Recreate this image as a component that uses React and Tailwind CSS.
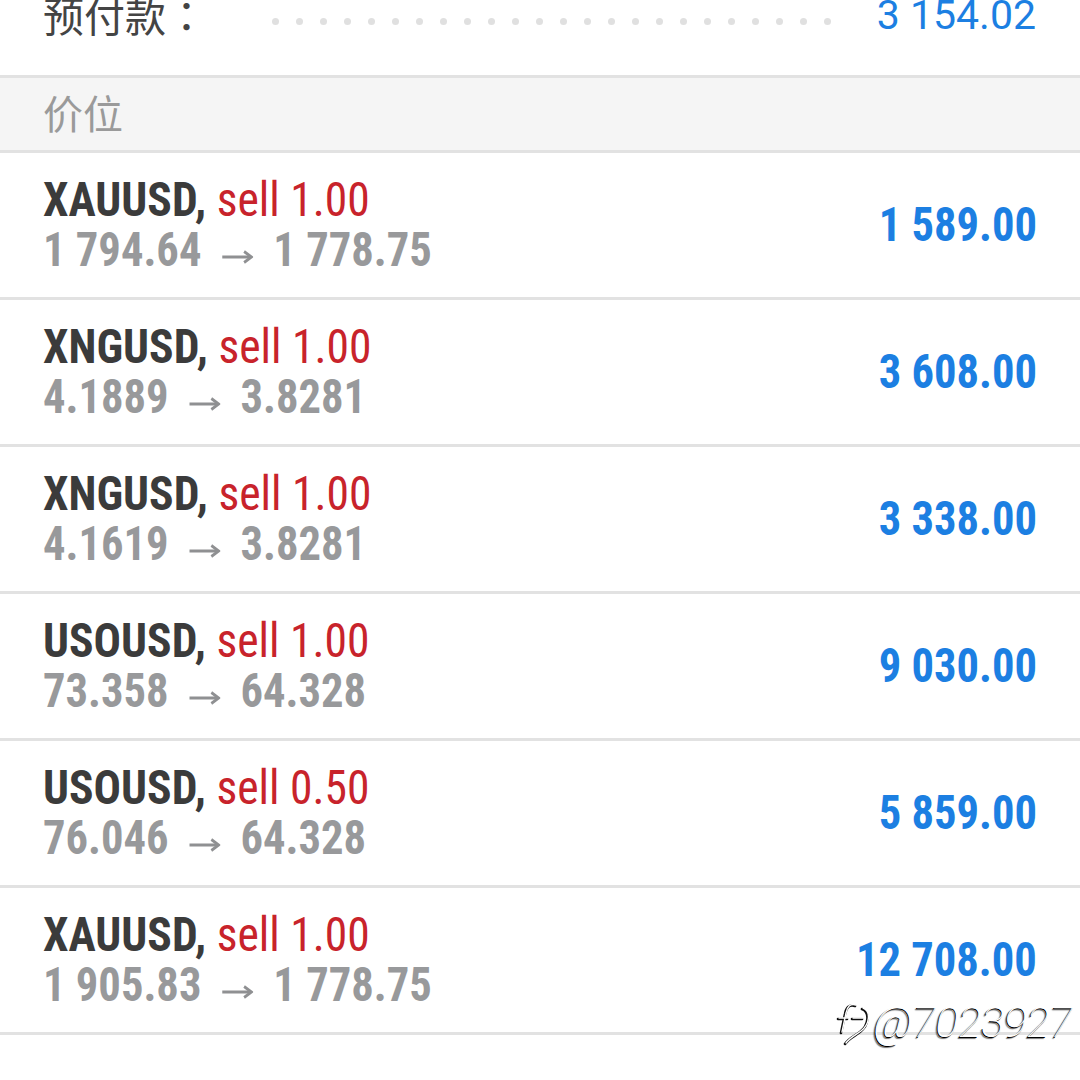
import React from "react";

const rows = [
  { sym: "XAUUSD", lot: "1.00", from: "1 794.64", to: "1 778.75", pl: "1 589.00" },
  { sym: "XNGUSD", lot: "1.00", from: "4.1889", to: "3.8281", pl: "3 608.00" },
  { sym: "XNGUSD", lot: "1.00", from: "4.1619", to: "3.8281", pl: "3 338.00" },
  { sym: "USOUSD", lot: "1.00", from: "73.358", to: "64.328", pl: "9 030.00" },
  { sym: "USOUSD", lot: "0.50", from: "76.046", to: "64.328", pl: "5 859.00" },
  { sym: "XAUUSD", lot: "1.00", from: "1 905.83", to: "1 778.75", pl: "12 708.00" },
];

function Arrow() {
  return (
    <svg width="35" height="14" viewBox="0 0 35 14" className="mx-[22px] mt-[14px] shrink-0">
      <path d="M1 7 H32" stroke="#8f9092" strokeWidth="3.2" fill="none" />
      <path d="M25 1.5 L33 7 L25 12.5" stroke="#8f9092" strokeWidth="3" fill="none" strokeLinejoin="miter" />
    </svg>
  );
}

export default function App() {
  const dots = Array.from({ length: 24 });
  return (
    <div className="relative w-[1080px] h-[1080px] overflow-hidden bg-white font-['Roboto','Noto_Sans_CJK_SC',sans-serif]">
      {/* top row */}
      <div className="h-[75px] overflow-hidden">
        <div className="-mt-[8px] flex items-center pl-[43px] pr-[44px] h-[44px]">
          <span className="text-[41px] leading-[40px] text-[#444444] font-['Noto_Sans_CJK_SC',sans-serif] w-[229px] shrink-0">
            预付款<span className="font-['Noto_Sans_CJK_JP',sans-serif]">：</span>
          </span>
          <div className="flex gap-[17px] mt-[14px]">
            {dots.map((_, i) => (
              <span key={i} className="block w-[7px] h-[7px] rounded-full bg-[#e0e0e0]" />
            ))}
          </div>
          <span className="ml-auto mt-[2px] text-[41px] leading-[40px] text-[#1c7fe2]">3 154.02</span>
        </div>
      </div>
      <div className="h-[3px] bg-[#e2e2e2]" />
      {/* header */}
      <div className="h-[72px] bg-[#f5f5f5] flex items-center pl-[43px] pb-[5px]">
        <span className="text-[40px] leading-[40px] text-[#9a9a9a] font-['Noto_Sans_CJK_SC',sans-serif]">价位</span>
      </div>
      <div className="h-[3px] bg-[#e2e2e2]" />
      {rows.map((r, i) => (
        <div key={i} className="h-[147px] border-b-[3px] border-[#e2e2e2] flex items-center pl-[43px] pr-[43px] [font-stretch:75%]">
          <div className="flex flex-col items-start">
            <div className="text-[49px] leading-[50px] whitespace-nowrap origin-left [transform:scaleX(0.93)]">
              <span className="font-bold text-[#3b3b3b]">{r.sym}, </span>
              <span className="text-[#c8232b]">sell {r.lot}</span>
            </div>
            <div className="flex items-center text-[49px] leading-[50px] font-bold text-[#98999b] whitespace-nowrap origin-left [transform:scaleX(0.91)]">
              <span>{r.from}</span>
              <Arrow />
              <span>{r.to}</span>
            </div>
          </div>
          <div className="ml-auto text-[49px] leading-[50px] font-bold text-[#1c7fe2] whitespace-nowrap origin-right [transform:scaleX(0.91)]">{r.pl}</div>
        </div>
      ))}
      {/* watermark */}
      <div className="absolute left-[832px] top-[996px] flex items-center">
        <svg width="42" height="52" viewBox="0 0 42 52">
          <g fill="none" strokeLinecap="round">
            <g stroke="#111" strokeWidth="2.6" transform="translate(-1 1)">
              <path d="M24 9 C18 7 15 11 14 17 L10 36" />
              <path d="M7 22 L16 22" />
              <path d="M21 22 L31 22" />
              <path d="M31 12 C39 15 38 28 29 35 C24 39 18 41 14 47" />
            </g>
            <g stroke="#fff" strokeWidth="1.4">
              <path d="M24 9 C18 7 15 11 14 17 L10 36" />
              <path d="M7 22 L16 22" />
              <path d="M21 22 L31 22" />
              <path d="M31 12 C39 15 38 28 29 35 C24 39 18 41 14 47" />
            </g>
          </g>
        </svg>
        <span className="text-[43px] leading-[44px] italic font-thin text-white font-['Roboto',sans-serif] [text-shadow:-1px_1px_0_#000,-2px_2px_1px_rgba(0,0,0,0.6)]">@7023927</span>
      </div>
    </div>
  );
}
